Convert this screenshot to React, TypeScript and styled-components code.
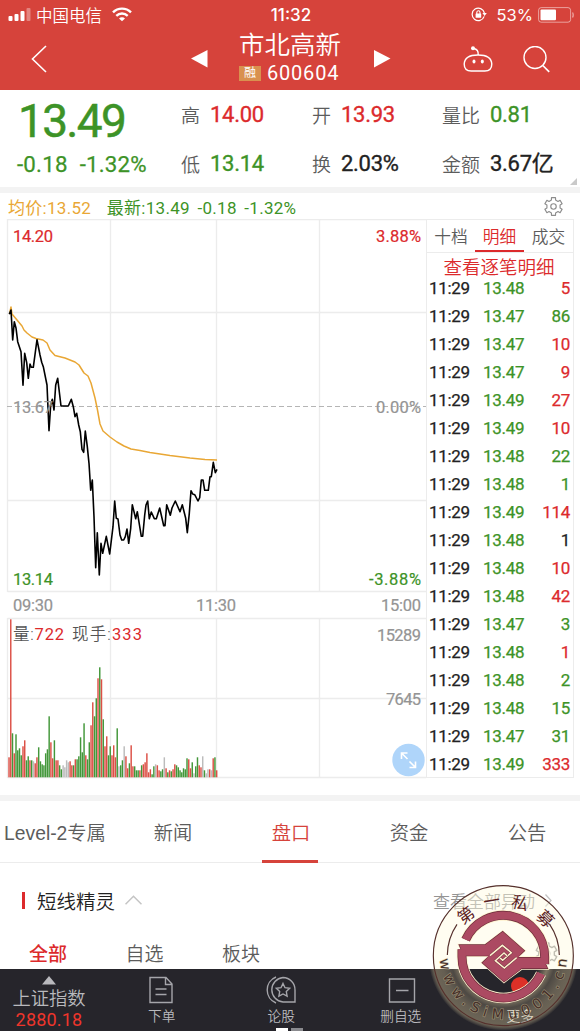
import React from "react";
import styled, { createGlobalStyle } from "styled-components";

const theme = {
  colors: {
    brand: "#d6433b",
    red: "#dc2a2c",
    green: "#3d9327",
    orange: "#e9a735",
    dark: "#222222",
    font: "#5c5c5c",
    gray: "#949494",
    line: "#ececec",
    band: "#f3f3f3",
    footer: "#26252b",
  },
  cjk: `"Noto Sans CJK SC", sans-serif`,
  digits: `Roboto, "Noto Sans CJK SC", sans-serif`,
};

type Tone = "red" | "green" | "dark";

const trades: [string, string, Tone][] = [
  ["13.48", "5", "red"],
  ["13.47", "86", "green"],
  ["13.47", "10", "red"],
  ["13.47", "9", "red"],
  ["13.49", "27", "red"],
  ["13.49", "10", "red"],
  ["13.48", "22", "green"],
  ["13.48", "1", "green"],
  ["13.49", "114", "red"],
  ["13.48", "1", "dark"],
  ["13.48", "10", "red"],
  ["13.48", "42", "red"],
  ["13.47", "3", "green"],
  ["13.48", "1", "red"],
  ["13.48", "2", "green"],
  ["13.48", "15", "green"],
  ["13.47", "31", "green"],
  ["13.49", "333", "red"],
];

const stats: [string, string, Tone][] = [
  ["高", "14.00", "red"],
  ["开", "13.93", "red"],
  ["量比", "0.81", "green"],
  ["低", "13.14", "green"],
  ["换", "2.03%", "dark"],
  ["金额", "3.67亿", "dark"],
];

const pricePoints =
  "9.3,314.3 11,310 12.7,340 14.3,321.7 16,328 17.7,341.7 21,351.7 23,385.3 24.7,353.3 26.7,362.7 28.3,378.3 30,364 31.3,367.3 33.3,367.3 37,339.7 40,355 41.7,362.3 43.3,366.7 47,385 49,430.7 50.7,405 52.3,399.3 54,410 55.7,385 57.7,378.3 61,406 68.3,406 71.3,399.3 73.3,406.7 75,416.7 76.7,413.3 78.7,425 80.3,431.7 82,449.3 83.7,452.3 85.3,431 87.3,446.7 89,463.3 90.7,490.3 92.3,480 94,516.7 95.7,567.7 97.3,532.7 99.3,575 101,543.3 102.7,553.3 106.3,536.3 109.7,554 113,526.7 114.7,501 116.3,518.3 118,519 120,535 121.7,540 123.7,540 125.3,536.7 127,529 128.7,543.3 130.7,528.3 132.3,504.7 135.7,518.7 137.3,511.7 141.3,536.3 142.7,536.3 144.7,515 146,505 147.7,501 149.3,518.7 151.3,512 154.3,518.7 156.3,518.7 159.7,508 163.7,525.7 165,525.7 166.7,504.7 170.3,515.3 172,508 175.3,501 180,511.7 182.3,504.7 185.7,518.3 187.3,532.7 189.3,513.3 191,490.7 192.7,494 194.7,494.7 198,501 199.7,497.7 201.3,480 203,480 204.7,490.3 208.3,490.3 210,476.7 211.3,476.7 213.3,462.3 215.3,472.7 217,469.3";

const averagePoints =
  "9.5,314 11,307 12,314 17,320 22,326 24,330 27,333 32,337 36,338.5 43,340 47,343 50,350 55,355.5 65,358 75,362 79,365 84,373 88,376 91,383 95,398 97.5,410 100,424 103,431 110,437 117,442 124,446 131,449 140,450.5 150,452.5 170,455.5 190,458 205,459.5 217,460";

// one entry per minute: r = up, g = down, x = flat
const volumes =
  "r20 r158 g44 r24 g43 g27 g29 g22 r31 r37 g17 g21 r17 g17 x16 r14 r20 g30 g16 g13 g12 g24 g28 g61 r35 r19 g37 r17 r17 g12 g8 x12 x10 x17 x15 r16 r12 g12 r18 g18 g21 g40 g25 g54 r22 g18 g35 r52 r75 g61 g79 r99 g110 r98 g58 r31 r41 g22 g31 r22 r32 r20 g49 x11 g12 g17 x31 r21 r9 g14 r32 r11 g11 g7 g7 r7 g12 r13 r15 r24 r5 r8 g3 g11 x13 r12 r7 g6 g8 x20 r9 g5 r7 g6 r8 r13 g12 g10 g7 g5 g9 g8 g19 r18 r9 g15 x4 g11 g20 r12 r10 x21 g7 x4 x8 r8 x7 r19 g20 r7".split(
    " "
  );
const volumeColors: Record<string, string> = {
  r: "#dc5046",
  g: "#43973a",
  x: "#bcbcbc",
};

const gearPoints = Array.from({ length: 6 }, (_, i) => {
  const tooth: [number, number][] = [
    [-18, 6.4],
    [-13, 8.6],
    [13, 8.6],
    [18, 6.4],
  ];
  return tooth
    .map(([offset, r]) => {
      const a = ((i * 60 + 30 + offset - 60) * Math.PI) / 180;
      return `${(10 + r * Math.cos(a)).toFixed(2)},${(
        10 +
        r * Math.sin(a)
      ).toFixed(2)}`;
    })
    .join(" ");
}).join(" ");

const Gear: React.FC<{ size: number }> = ({ size }) => (
  <svg width={size} height={size} viewBox="0 0 20 20" fill="none" stroke="#8d8d8d">
    <polygon points={gearPoints} strokeWidth="1.1" strokeLinejoin="round" />
    <circle cx="10" cy="10" r="2.6" strokeWidth="1.1" />
  </svg>
);

const StatusBar: React.FC = () => (
  <StyledStatus>
    <Carrier>
      <svg width="24" height="13" fill="#fff">
        <rect x="0.5" y="8" width="4" height="5" rx="1" />
        <rect x="6.5" y="6" width="4" height="7" rx="1" />
        <rect x="12.5" y="3" width="4" height="10" rx="1" />
        <rect x="18.5" y="0" width="4" height="13" rx="1" opacity="0.35" />
      </svg>
      <span>中国电信</span>
      <svg width="20" height="15" viewBox="0 0 20 15" fill="none" stroke="#fff">
        <path d="M1 5.4a12.6 12.6 0 0 1 18 0" strokeWidth="2.4" />
        <path d="M4.3 8.9a8 8 0 0 1 11.4 0" strokeWidth="2.3" />
        <path d="M10 14.2 7 11.4a4.2 4.2 0 0 1 6 0Z" fill="#fff" stroke="none" />
      </svg>
    </Carrier>
    <Clock>11:32</Clock>
    <Battery>
      <svg width="16" height="15" viewBox="0 0 16 15" fill="none" stroke="#fff">
        <path d="M13.2 9.4A6.2 6.2 0 1 1 13.4 6" strokeWidth="1.2" />
        <path d="M11.4 6h4.4l-2.2 3Z" fill="#fff" stroke="none" />
        <rect x="4.6" y="6.6" width="5.6" height="4.2" rx="0.5" fill="#fff" stroke="none" />
        <path d="M5.8 7V5.4a1.6 1.6 0 0 1 3.2 0V7" strokeWidth="1.1" />
      </svg>
      <span>53%</span>
      <svg width="36" height="16" fill="none">
        <rect x="0.6" y="0.6" width="32" height="14.6" rx="2.6" stroke="#fff" strokeOpacity="0.5" />
        <rect x="2.5" y="2.5" width="15.5" height="10.8" rx="1" fill="#fff" />
        <path d="M34.5 5.5q1.4 2.4 0 5" stroke="#fff" strokeOpacity="0.5" strokeWidth="1.4" />
      </svg>
    </Battery>
  </StyledStatus>
);

const Header: React.FC = () => (
  <StyledHeader>
    <StatusBar />
    <NavBar>
      <svg width="16" height="30" viewBox="0 0 16 30" fill="none" stroke="#fff" strokeWidth="1.6">
        <path d="M15 1 1.500 14 15 27" />
      </svg>
      <svg width="17" height="20" fill="#fff">
        <path d="M0 8.500 16.500 0v17.500Z" />
      </svg>
      <Title>
        <StockName>市北高新</StockName>
        <StockCode>
          <Badge>融</Badge>
          600604
        </StockCode>
      </Title>
      <svg width="17" height="20" fill="#fff">
        <path d="M16.500 8.500 0 0v17.500Z" />
      </svg>
      <svg width="30" height="28" viewBox="0 0 30 28" fill="none" stroke="#fff" strokeWidth="1.4">
        <path d="M15 9C8 9 1.500 11.300 1.200 18c0 5 3 7 7 7h13.600c4 0 7-2 7-7C28.500 11.300 22 9 15 9Z" />
        <path d="M15.200 9c.3-3.500-1.500-6-4.500-6.500" />
        <circle cx="10" cy="2.200" r="2" fill="#fff" stroke="none" />
        <ellipse cx="11" cy="15.500" rx="1.500" ry="2" fill="#fff" stroke="none" />
        <ellipse cx="19.300" cy="15.500" rx="1.500" ry="2" fill="#fff" stroke="none" />
      </svg>
      <svg width="28" height="28" viewBox="0 0 28 28" fill="none" stroke="#fff" strokeWidth="1.4">
        <circle cx="12" cy="11.500" r="11" />
        <path d="m19.800 19.500 6.400 6.400" strokeWidth="1.700" />
      </svg>
    </NavBar>
  </StyledHeader>
);

const Quote: React.FC = () => (
  <StyledQuote>
    <PriceBlock>
      <Price>13.49</Price>
      <Change>
        <span>-0.18</span>
        <span>-1.32%</span>
      </Change>
    </PriceBlock>
    <StatsGrid>
      {stats.map(([label, value, tone]) => (
        <Stat key={label}>
          <StatLabel>{label}</StatLabel>
          <StatValue $tone={tone}>{value}</StatValue>
        </Stat>
      ))}
    </StatsGrid>
    <Corner />
  </StyledQuote>
);

const Chart: React.FC = () => (
  <svg width="426" height="560" viewBox="0 219 426 560" fontFamily={theme.digits}>
    <g stroke={theme.colors.line} strokeWidth="1.3" fill="none">
      <path d="M7.500 219.500H427M7.500 312.500H427M7.500 500.500H427M7.500 591.500H427M7.500 618.500H427M7.500 698.500H427M7.500 777.500H427" />
      <path d="M7.500 219V592M110.500 219V592M216.500 219V592M319.500 219V592" />
      <path d="M7.500 618V778M110.500 618V778M216.500 618V778M319.500 618V778" />
    </g>
    <path d="M7 406.500H427" stroke="#b5b5b5" strokeWidth="1.200" strokeDasharray="5 3" />
    <polyline points={averagePoints} fill="none" stroke={theme.colors.orange} strokeWidth="1.500" strokeLinejoin="round" />
    <polyline points={pricePoints} fill="none" stroke="#000" strokeWidth="1.600" strokeLinejoin="round" />
    {volumes.map((item, i) => {
      const height = Number(item.slice(1));
      return (
        <rect
          key={i}
          x={8.3 + i * 1.745}
          y={777.3 - height}
          width="1.450"
          height={height}
          fill={volumeColors[item[0]]}
        />
      );
    })}
    <g fontSize="16.500" fontWeight="400" strokeWidth="0.200">
      <g fill={theme.colors.red} stroke={theme.colors.red}>
        <text x="13" y="242" textLength="40">14.20</text>
        <text x="376" y="242" textLength="45">3.88%</text>
      </g>
      <g fill={theme.colors.green} stroke={theme.colors.green}>
        <text x="13" y="585" textLength="40">13.14</text>
        <text x="369" y="585" textLength="52">-3.88%</text>
      </g>
      <g fill={theme.colors.gray} stroke={theme.colors.gray}>
        <text x="13" y="413" textLength="40">13.67</text>
        <text x="376" y="413" textLength="45">0.00%</text>
        <text x="13" y="611" textLength="40">09:30</text>
        <text x="196" y="611" textLength="40">11:30</text>
        <text x="381" y="611" textLength="40">15:00</text>
        <text x="377" y="640.500" textLength="44">15289</text>
        <text x="386" y="705" textLength="35">7645</text>
      </g>
    </g>
    <g fontSize="16.500" fontWeight="350" fill="#555">
      <text x="13" y="640" textLength="51">
        量:<tspan fill={theme.colors.red} fontWeight="400">722</tspan>
      </text>
      <text x="72" y="640" textLength="70">
        现手:<tspan fill={theme.colors.red} fontWeight="400">333</tspan>
      </text>
    </g>
    <circle cx="408.500" cy="760" r="16.200" fill="#afd5fa" />
    <path
      d="M401.500 759v-6h6M401.500 753l6 6M415.500 761.500v6h-6M415.500 767.500l-6-6"
      fill="none"
      stroke="#fff"
      strokeWidth="1.600"
    />
  </svg>
);

const Market: React.FC = () => (
  <StyledMarket>
    <Legend>
      <LegendText $color={theme.colors.orange}>均价:13.52</LegendText>
      <LegendText $color={theme.colors.green}>最新:13.49</LegendText>
      <LegendText $color={theme.colors.green}>-0.18</LegendText>
      <LegendText $color={theme.colors.green}>-1.32%</LegendText>
      <Gear size={21} />
    </Legend>
    <MarketBody>
      <Chart />
      <Details>
        <DetailTabs>
          <DetailTab>十档</DetailTab>
          <DetailTab $active>明细</DetailTab>
          <DetailTab>成交</DetailTab>
        </DetailTabs>
        <DetailLink>查看逐笔明细</DetailLink>
        {trades.map(([price, amount, tone], index) => (
          <TradeRow key={index}>
            <TradeCell $tone="dark">11:29</TradeCell>
            <TradeCell $tone="green">{price}</TradeCell>
            <TradeCell $tone={tone} $end>
              {amount}
            </TradeCell>
          </TradeRow>
        ))}
      </Details>
    </MarketBody>
  </StyledMarket>
);

const halfRing = "M527 449A124 124 0 0 1 764 500V522";
const halfArm = "M508 465H585L638 425L703 482L640 540V500L600 497H522Z";
const halfGroove = "M600 497L637 466L664 488L638 511L628 502";
const halves = [0, 180];

const Halves: React.FC<{ children: React.ReactNode }> = ({ children }) => (
  <>
    {halves.map((angle) => (
      <g key={angle} transform={`rotate(${angle} 640 500)`} fill="none">
        {children}
      </g>
    ))}
  </>
);

const Seal: React.FC = () => (
  <StyledSeal width="155" height="156" viewBox="405 255 465 468">
    <defs>
      <clipPath id="sealLight">
        <rect x="405" y="255" width="465" height="282" />
      </clipPath>
      <clipPath id="sealDark">
        <rect x="405" y="537" width="465" height="186" />
      </clipPath>
      <radialGradient id="sealGlow" gradientUnits="userSpaceOnUse" cx="640" cy="497" r="225">
        <stop offset="0.480" stopColor="#d8c69a" stopOpacity="0" />
        <stop offset="0.610" stopColor="#d8c69a" stopOpacity="0.500" />
        <stop offset="0.700" stopColor="#c4b48c" stopOpacity="0.250" />
        <stop offset="0.820" stopColor="#c4b48c" stopOpacity="0.400" />
        <stop offset="0.940" stopColor="#c4b48c" stopOpacity="0.450" />
        <stop offset="1" stopColor="#d8c69a" stopOpacity="0" />
      </radialGradient>
      <path id="sealArc" d="M449 497A191 191 0 0 0 831 497" />
    </defs>
    <g clipPath="url(#sealLight)">
      <circle cx="640" cy="497" r="211" fill="#fffbe0" fillOpacity="0.450" />
    </g>
    <g clipPath="url(#sealDark)">
      <circle cx="640" cy="497" r="225" fill="url(#sealGlow)" />
    </g>
    <g fill="none" stroke="#55302c" strokeWidth="3.500">
      <circle cx="640" cy="497" r="210" />
      <path d="M472 495A168 168 0 0 1 501 403M808 495A168 168 0 0 0 779 403" />
    </g>
    <Halves>
      <path d={halfRing} stroke="#fff3d0" strokeWidth="32" />
      <path d={halfArm} stroke="#fff3d0" strokeWidth="8" />
    </Halves>
    <Halves>
      <path d={halfRing} stroke="#6b2c3a" strokeWidth="27" />
      <path d={halfArm} stroke="#6b2c3a" strokeWidth="4" />
    </Halves>
    <Halves>
      <path d={halfRing} stroke="#ac4a62" strokeWidth="23" />
      <path d={halfArm} fill="#ac4a62" />
    </Halves>
    <path d="M640 430 698 482 640 572 582 518Z" fill="#ac4a62" />
    <Halves>
      <path d={halfGroove} stroke="#6b2c3a" strokeWidth="7" />
      <path d={halfGroove} stroke="#fff3d0" strokeWidth="4.500" />
    </Halves>
    <g fill="#5a211f" fontFamily={theme.cjk} fontSize="50" fontWeight="400" textAnchor="middle">
      <text transform="translate(528 376) rotate(-36)" y="18">第</text>
      <text transform="translate(605 333) rotate(-10)" y="18">一</text>
      <text transform="translate(690 339) rotate(14)" y="18">私</text>
      <text transform="translate(766 386) rotate(44)" y="18">募</text>
    </g>
    <text
      fill="#463029"
      stroke="#d8c69a"
      strokeOpacity="0.450"
      strokeWidth="4"
      paintOrder="stroke"
      fontFamily="DejaVu Sans, sans-serif"
      fontSize="43"
      fontWeight="400"
    >
      <textPath href="#sealArc" startOffset="10" textLength="580">
        www.SiMu001.cn
      </textPath>
    </text>
  </StyledSeal>
);

const Footer: React.FC = () => (
  <StyledFooter>
    <IndexItem>
      <svg width="14" height="9" fill="#b9b9bd">
        <path d="M7 0 14 8.500H0Z" />
      </svg>
      <IndexName>上证指数</IndexName>
      <IndexValue>2880.18</IndexValue>
    </IndexItem>
    <FooterItem>
      <svg width="30" height="28" viewBox="0 0 30 28" fill="none" stroke="#a5a5aa" strokeWidth="1.400">
        <path d="M3 1.500h16l6 6.500v18.500H3ZM18.500 1.500V8.500H25M8.500 13h11M8.500 18.500h11" />
      </svg>
      下单
    </FooterItem>
    <FooterItem>
      <svg width="30" height="28" viewBox="0 0 30 28" fill="none" stroke="#a5a5aa" strokeWidth="1.400">
        <path d="M17 1.500a12.300 12.300 0 0 1 12 12.500v12H17a12.300 12.300 0 0 1 0-24.500Z" />
        <path d="M10 1A14 14 0 0 0 10 27" />
        <path d="m17 7.500 2 4.200 4.700.6-3.400 3.300.8 4.600-4.100-2.200-4.100 2.200.8-4.600-3.400-3.300 4.700-.6Z" />
      </svg>
      论股
    </FooterItem>
    <FooterItem>
      <svg width="30" height="28" viewBox="0 0 30 28" fill="none" stroke="#a5a5aa" strokeWidth="1.400">
        <path d="M3.500 3h25v23h-25ZM10 14.500h12.500" />
      </svg>
      删自选
    </FooterItem>
    <FooterItem $bright>
      <svg width="30" height="28" viewBox="0 0 30 28">
        <circle cx="15" cy="10" r="9" fill="#dd3027" />
      </svg>
      更多
    </FooterItem>
    <Pager>
      <PagerDot $active />
      <PagerDot />
    </Pager>
  </StyledFooter>
);

const tabs = ["Level-2专属", "新闻", "盘口", "资金", "公告"];

const App: React.FC = () => {
  return (
    <Screen>
      <GlobalStyle />
      <Header />
      <Quote />
      <Market />
      <Tabs>
        {tabs.map((tab) => (
          <Tab key={tab} $active={tab === "盘口"}>
            {tab}
          </Tab>
        ))}
      </Tabs>
      <SectionHead>
        <SectionMark />
        <SectionName>短线精灵</SectionName>
        <svg width="17" height="10" fill="none" stroke="#c4c4c4" strokeWidth="1.500">
          <path d="M.5 9.300 8.500 1.300 16.500 9.300" />
        </svg>
        <SectionMore>
          查看全部异动
          <svg width="7" height="13" fill="none" stroke="#c4c4c4" strokeWidth="1.300">
            <path d="m.5.500 5.500 6-5.500 6" />
          </svg>
        </SectionMore>
      </SectionHead>
      <Filters>
        <Filter $active>全部</Filter>
        <Filter>自选</Filter>
        <Filter>板块</Filter>
        <Gear size={25} />
      </Filters>
      <Footer />
      <Seal />
    </Screen>
  );
};

export default App;

const GlobalStyle = createGlobalStyle`
  * {
    box-sizing: border-box;
  }
  body {
    margin: 0;
    background: #fff;
    font-family: ${theme.cjk};
    font-weight: 350;
  }
  svg {
    display: block;
    flex-shrink: 0;
  }
`;

const Screen = styled.main`
  position: relative;
  width: 580px;
  height: 1031px;
  overflow: hidden;
  display: flex;
  flex-direction: column;
  background: #fff;
`;

const StyledHeader = styled.header`
  height: 90px;
  flex-shrink: 0;
  background: ${theme.colors.brand};
  color: #fff;
`;
const StyledStatus = styled.div`
  height: 29px;
  padding: 0 6px 0 8px;
  display: grid;
  grid-template-columns: 1fr 60px 1fr;
  align-items: center;
  font-size: 16.5px;
  line-height: 28px;
`;
const Carrier = styled.div`
  display: flex;
  align-items: center;
  gap: 4px;
  svg:last-child {
    margin-left: 6px;
  }
`;
const Clock = styled.div`
  font-family: Inter, sans-serif;
  font-weight: 500;
  font-size: 17px;
  text-align: center;
`;
const Battery = styled.div`
  display: flex;
  align-items: center;
  justify-content: flex-end;
  gap: 5px;
  font-family: Inter, sans-serif;
  font-weight: 400;
  span {
    margin-left: 5px;
  }
`;
const NavBar = styled.div`
  height: 61px;
  display: grid;
  grid-template-columns: 160px 48px 135px 89px 60px 57px;
  align-items: center;
  padding-left: 31px;
`;
const Title = styled.div`
  display: flex;
  flex-direction: column;
  align-items: flex-start;
  white-space: nowrap;
`;
const StockName = styled.h1`
  margin: -4px 0 2px;
  font-size: 25.5px;
  font-weight: 350;
  line-height: 29px;
`;
const StockCode = styled.div`
  display: flex;
  align-items: center;
  gap: 6px;
  font-family: ${theme.digits};
  font-size: 20px;
  font-weight: 400;
  letter-spacing: 0.8px;
  line-height: 28px;
`;
const Badge = styled.span`
  width: 22px;
  height: 15px;
  background: #d9914f;
  font-size: 12px;
  line-height: 15px;
  letter-spacing: 0;
  text-align: center;
`;

const StyledQuote = styled.section`
  position: relative;
  height: 103px;
  flex-shrink: 0;
  display: flex;
  border-bottom: 6px solid ${theme.colors.band};
`;
const PriceBlock = styled.div`
  width: 181px;
  padding-left: 17px;
  color: ${theme.colors.green};
  font-family: ${theme.digits};
  font-weight: 400;
`;
const Price = styled.div`
  padding-left: 1px;
  margin-top: 5px;
  font-size: 46px;
  line-height: 52px;
  letter-spacing: -1.7px;
  -webkit-text-stroke: 0.5px currentColor;
`;
const Change = styled.div`
  display: flex;
  gap: 12px;
  font-size: 22.3px;
  line-height: 34px;
  letter-spacing: 0.2px;
  -webkit-text-stroke: 0.25px currentColor;
`;
const StatsGrid = styled.div`
  display: grid;
  grid-template-columns: 131px 130px 138px;
  grid-template-rows: 49px 49px;
`;
const Stat = styled.div`
  display: flex;
  align-items: center;
  gap: 10px;
  white-space: nowrap;
`;
const StatLabel = styled.span`
  color: ${theme.colors.font};
  font-size: 19px;
  line-height: 26px;
`;
const StatValue = styled.span<{ $tone: Tone }>`
  color: ${({ $tone }) => theme.colors[$tone]};
  font-family: ${theme.digits};
  font-size: 22px;
  font-weight: 400;
  letter-spacing: -0.3px;
  line-height: 26px;
  -webkit-text-stroke: 0.35px currentColor;
`;
const Corner = styled.i`
  position: absolute;
  right: 3px;
  bottom: 2px;
  border-left: 7px solid transparent;
  border-bottom: 7px solid #c9c9c9;
`;

const StyledMarket = styled.section`
  height: 608px;
  flex-shrink: 0;
  border-bottom: 6px solid ${theme.colors.band};
`;
const Legend = styled.div`
  height: 26px;
  padding: 4px 16px 0 8px;
  display: flex;
  align-items: center;
  gap: 7.5px;
  line-height: 22px;
  svg {
    margin: -4px 0 0 auto;
  }
`;
const LegendText = styled.span<{ $color: string }>`
  color: ${({ $color }) => $color};
  font-family: ${theme.digits};
  font-size: 17px;
  font-weight: 400;
  letter-spacing: 0.3px;
  &:first-child {
    margin-right: 8px;
  }
`;
const MarketBody = styled.div`
  display: flex;
`;
const Details = styled.div`
  width: 148px;
  height: 559px;
  border: 1px solid ${theme.colors.line};
`;
const DetailTabs = styled.div`
  height: 33px;
  display: grid;
  grid-template-columns: 48px 49px 49px;
  border-bottom: 1px solid ${theme.colors.line};
`;
const DetailTab = styled.div<{ $active?: boolean }>`
  height: 32px;
  color: ${({ $active }) => ($active ? theme.colors.red : theme.colors.font)};
  border-bottom: 2px solid
    ${({ $active }) => ($active ? theme.colors.red : "transparent")};
  font-size: 16.7px;
  line-height: 32px;
  text-align: center;
`;
const DetailLink = styled.div`
  height: 21px;
  padding-right: 2px;
  color: ${theme.colors.red};
  font-size: 18.5px;
  line-height: 27px;
  text-align: center;
`;
const TradeRow = styled.div`
  height: 28px;
  padding: 0 3px 0 2px;
  display: grid;
  grid-template-columns: 54px 50px 1fr;
  align-items: center;
`;
const TradeCell = styled.span<{ $tone: Tone; $end?: boolean }>`
  color: ${({ $tone }) => theme.colors[$tone]};
  font-family: ${theme.digits};
  font-size: 17px;
  font-weight: 400;
  letter-spacing: -0.3px;
  line-height: 28px;
  text-align: ${({ $end }) => ($end ? "right" : "left")};
  -webkit-text-stroke: 0.25px currentColor;
`;

const Tabs = styled.nav`
  height: 62px;
  flex-shrink: 0;
  display: flex;
  justify-content: center;
  border-bottom: 1px solid ${theme.colors.line};
`;
const Tab = styled.div<{ $active: boolean }>`
  width: 118px;
  height: 62px;
  flex-shrink: 0;
  display: flex;
  flex-direction: column;
  align-items: center;
  color: ${({ $active }) => ($active ? theme.colors.brand : theme.colors.font)};
  font-family: "Liberation Sans", ${theme.cjk};
  font-size: 19.3px;
  line-height: 65px;
  text-indent: 2px;
  &::after {
    content: "";
    width: 56px;
    height: 2.5px;
    margin-top: -6px;
    background: ${({ $active }) =>
      $active ? theme.colors.brand : "transparent"};
  }
`;

const SectionHead = styled.div`
  height: 76px;
  flex-shrink: 0;
  padding: 0 28px 2px 22px;
  display: flex;
  align-items: center;
`;
const SectionMark = styled.i`
  width: 3px;
  height: 17px;
  margin-right: 12px;
  background: ${theme.colors.red};
`;
const SectionName = styled.h2`
  margin: 0 10px 0 0;
  color: ${theme.colors.dark};
  font-size: 19.5px;
  font-weight: 350;
`;
const SectionMore = styled.div`
  margin-left: auto;
  display: flex;
  align-items: center;
  gap: 10px;
  color: ${theme.colors.gray};
  font-size: 17px;
`;
const Filters = styled.div`
  height: 30px;
  flex-shrink: 0;
  padding: 0 21px 2px 29px;
  display: flex;
  align-items: center;
  gap: 58.5px;
  svg {
    margin-left: auto;
  }
`;
const Filter = styled.div<{ $active?: boolean }>`
  color: ${({ $active }) => ($active ? theme.colors.red : theme.colors.font)};
  font-size: 19px;
  font-weight: ${({ $active }) => ($active ? 500 : 350)};
  line-height: 30px;
`;

const StyledFooter = styled.footer`
  position: relative;
  height: 62px;
  flex-shrink: 0;
  display: grid;
  grid-template-columns: 102px repeat(4, 119.5px);
  background: ${theme.colors.footer};
  color: #b9b9bd;
`;
const IndexItem = styled.div`
  padding: 7px 4px 0 0;
  display: flex;
  flex-direction: column;
  align-items: center;
`;
const IndexName = styled.div`
  font-size: 18.3px;
  line-height: 25px;
`;
const IndexValue = styled.div`
  color: #ee352b;
  font-family: ${theme.digits};
  font-size: 18px;
  font-weight: 400;
  line-height: 20px;
  letter-spacing: 0.2px;
`;
const FooterItem = styled.div<{ $bright?: boolean }>`
  padding-top: 7px;
  display: flex;
  flex-direction: column;
  align-items: center;
  color: ${({ $bright }) => ($bright ? "#f0f0f0" : "inherit")};
  font-size: 13.7px;
  line-height: 23px;
`;
const Pager = styled.div`
  position: absolute;
  left: 276px;
  bottom: 0;
  display: flex;
  gap: 3px;
`;
const PagerDot = styled.i<{ $active?: boolean }>`
  width: 12px;
  height: 3px;
  background: ${({ $active }) => ($active ? "#fff" : "#8a8a8e")};
`;
const StyledSeal = styled.svg`
  position: absolute;
  left: 425px;
  top: 875px;
`;
